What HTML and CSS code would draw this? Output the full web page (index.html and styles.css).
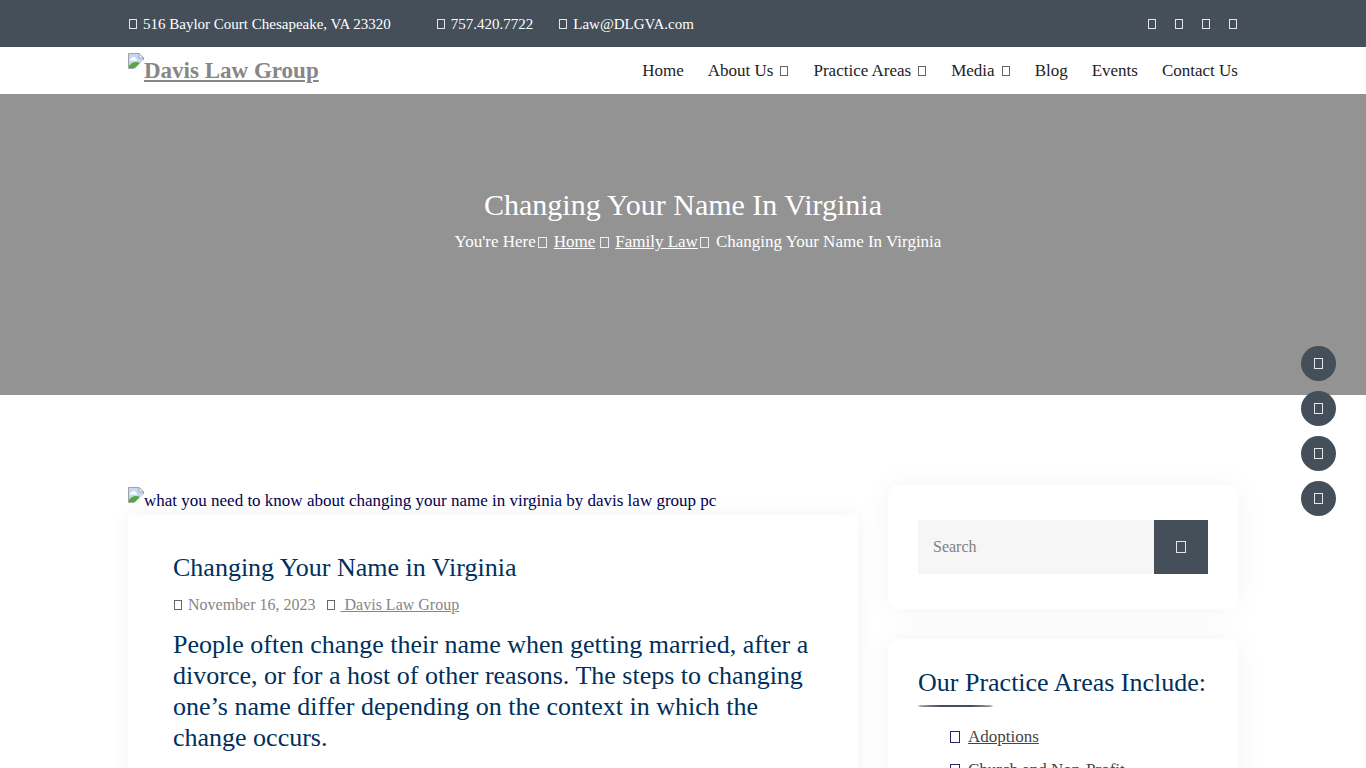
FILE: index.html
```html
<!DOCTYPE html>
<html lang="en">
<head>
    <meta charset="UTF-8">
    <meta name="viewport" content="width=device-width, initial-scale=1.0">
    <title>Changing Your Name in Virginia | Davis Law Group</title>
    <link rel="stylesheet" href="styles.css">
</head>
<body>
    <!-- Shared picture symbol -->
    <svg class="symbols" aria-hidden="true">
        <symbol id="picture" viewBox="0 0 16 16">
            <path d="M0.5 0.5H11L15.5 5V8L8 15.5H0.5Z" fill="#c6d7f4"/>
            <path d="M2 7C2 5.500 3 5 4 5.500C4.500 3.500 7.500 3.500 8 6C9 6 9.500 7 9 7.500H2Z" fill="#fff"/>
            <path d="M1 15V13C3 10 7 7.500 12 10L7 15Z" fill="#55a83f"/>
            <path d="M7 15.500L15.500 7V9L9 15.500Z" fill="#fff"/>
            <path d="M15.500 7V5L11 0.500H0.500V15.500H6" fill="none" stroke="#a3a3a3"/>
            <path d="M11 0.500V5H15.500Z" fill="#fff" stroke="#a3a3a3"/>
        </symbol>
    </svg>

    <div class="topbar">
        <div class="container topbar-row">
            <ul class="contact">
                <li class="address"><i class="icon small"></i>516 Baylor Court Chesapeake, VA 23320</li>
                <li><a href="tel:7574207722"><i class="icon small"></i>757.420.7722</a></li>
                <li><a href="mailto:Law@DLGVA.com"><i class="icon small"></i>Law@DLGVA.com</a></li>
            </ul>
            <ul class="social">
                <li><a href="#" aria-label="Facebook"><i class="icon small"></i></a></li>
                <li><a href="#" aria-label="Twitter"><i class="icon small"></i></a></li>
                <li><a href="#" aria-label="LinkedIn"><i class="icon small"></i></a></li>
                <li><a href="#" aria-label="YouTube"><i class="icon small"></i></a></li>
            </ul>
        </div>
    </div>

    <header class="container header">
        <a class="logo" href="#"><svg class="picture"><use href="#picture"/></svg><span>Davis Law Group</span></a>
        <nav class="menu">
            <a href="#">Home</a>
            <a href="#">About Us<i class="icon small"></i></a>
            <a href="#">Practice Areas<i class="icon small"></i></a>
            <a href="#">Media<i class="icon small"></i></a>
            <a href="#">Blog</a>
            <a href="#">Events</a>
            <a href="#">Contact Us</a>
        </nav>
    </header>

    <section class="banner">
        <h1>Changing Your Name In Virginia</h1>
        <div class="breadcrumb">
            <span>You're Here</span><i class="icon"></i>
            <a href="#">Home</a><i class="icon spaced"></i>
            <a href="#">Family Law</a><i class="icon"></i>
            <span>Changing Your Name In Virginia</span>
        </div>
    </section>

    <main class="container content">
        <article class="post">
            <div class="post-image"><svg class="picture"><use href="#picture"/></svg><span>what you need to know about changing your name in virginia by davis law group pc</span></div>
            <div class="post-body">
                <h2>Changing Your Name in Virginia</h2>
                <div class="meta">
                    <span><i class="icon small"></i>November 16, 2023</span>
                    <span><i class="icon small"></i><a href="#">&nbsp;Davis Law Group</a></span>
                </div>
                <h2>People often change their name when getting married, after a divorce, or for a host of other reasons. The steps to changing one’s name differ depending on the context in which the change occurs.</h2>
            </div>
        </article>

        <aside class="sidebar">
            <div class="widget">
                <form class="search">
                    <input type="text" placeholder="Search" aria-label="Search">
                    <button type="submit" aria-label="Submit search"><i class="icon large"></i></button>
                </form>
            </div>
            <div class="widget areas">
                <h2>Our Practice Areas Include:</h2>
                <ul>
                    <li><i class="icon large"></i><a href="#">Adoptions</a></li>
                    <li><i class="icon large"></i><a href="#">Church and Non-Profit</a></li>
                </ul>
            </div>
        </aside>
    </main>

    <!-- Floating share buttons -->
    <div class="share">
        <a href="#" aria-label="Facebook"><i class="icon"></i></a>
        <a href="#" aria-label="Twitter"><i class="icon"></i></a>
        <a href="#" aria-label="LinkedIn"><i class="icon"></i></a>
        <a href="#" aria-label="Email"><i class="icon"></i></a>
    </div>
</body>
</html>
```
FILE: styles.css
```css
* {
    box-sizing: border-box;
}
body {
    margin: 0;
    font-family: "Liberation Serif", serif;
    font-size: 17px;
    line-height: 26px;
    color: #02014f;
    background: #fff;
}
ul {
    list-style: none;
    margin: 0;
    padding: 0;
}
h1, h2 {
    margin: 0;
    font-weight: normal;
}
h2 {
    font-size: 26px;
    line-height: 31px;
    color: #00305b;
}
.container {
    width: calc(100% - 30px);
    max-width: 1110px;
    margin: 0 auto;
}
.symbols {
    display: none;
}
.picture {
    width: 16px;
    height: 16px;
    flex: none;
}

/* icon boxes */
.icon {
    display: inline-block;
    flex: none;
    width: 9px;
    height: 11px;
    border: 1px solid currentColor;
    opacity: 0.85;
}
.icon.small {
    width: 8px;
    height: 10px;
}
.icon.large {
    width: 10px;
    height: 12px;
}

/* top bar */
.topbar {
    background: #444f5a;
    color: #fff;
    font-size: 15px;
}
.topbar a {
    color: #fff;
    text-decoration: none;
}
.topbar-row {
    display: flex;
    justify-content: space-between;
    align-items: center;
    height: 47px;
}
.contact, .social {
    display: flex;
}
.contact {
    gap: 25px;
}
.contact .icon {
    margin: 0 6px 0 1px;
}
.contact .address {
    margin-right: 20px;
}
.social {
    gap: 19px;
    padding-right: 1px;
}

/* header */
.header {
    display: flex;
    justify-content: space-between;
    align-items: center;
    height: 47px;
}
.logo {
    display: flex;
    color: #868686;
    font-size: 23px;
    font-weight: bold;
    line-height: 36px;
    text-decoration: none;
}
.logo span {
    text-decoration: underline;
}
.menu {
    display: flex;
    gap: 24px;
}
.menu a {
    color: #222;
    text-decoration: none;
}
.menu .icon {
    margin: 0 1px 0 7px;
    opacity: 0.7;
}

/* banner */
.banner {
    min-height: 301px;
    padding-top: 93px;
    background: #939393;
    color: #fff;
    text-align: center;
}
.banner h1 {
    font-size: 30px;
    line-height: 36px;
}
.breadcrumb {
    display: flex;
    justify-content: center;
    align-items: center;
    padding-left: 30px;
    margin-top: 6px;
}
.breadcrumb a {
    color: #fff;
}
.breadcrumb .icon {
    margin: 0 7px 0 2px;
}
.breadcrumb .spaced {
    margin: 0 6px 0 5px;
}

/* content */
.content {
    display: grid;
    grid-template-columns: minmax(0, 730fr) minmax(0, 350fr);
    gap: 30px;
    padding-top: 90px;
}
.post-image {
    display: flex;
    padding-top: 2px;
    min-height: 30px;
    line-height: 28px;
}
.post-body {
    padding: 37px 45px;
    box-shadow: 0 0 20px rgba(0, 0, 0, 0.05);
}
.meta {
    display: flex;
    gap: 10px;
    margin: 9px 0 11px;
    font-size: 16px;
    color: #868686;
}
.meta a {
    color: #868686;
}
.meta .icon {
    margin: 0 6px 0 1px;
    color: #444f5a;
}
.widget {
    margin-bottom: 30px;
    padding: 35px 30px;
    border-radius: 10px;
    box-shadow: 0 0 30px rgba(0, 0, 0, 0.05);
}
.search {
    display: flex;
}
.search input {
    flex: 1;
    min-width: 0;
    height: 54px;
    padding: 0 15px;
    border: none;
    background: #f6f6f6;
    font-family: inherit;
    font-size: 16px;
}
.search input::placeholder {
    color: #808080;
}
.search button {
    display: flex;
    align-items: center;
    justify-content: center;
    width: 54px;
    height: 54px;
    border: none;
    background: #444f5a;
    color: #fff;
}
.areas {
    padding-top: 28px;
}
.areas h2::after {
    content: "";
    display: block;
    width: 75px;
    height: 2px;
    margin-top: 7px;
    border-radius: 50%;
    background: #444f5a;
}
.areas ul {
    margin-top: 17px;
    padding-left: 32px;
}
.areas li {
    display: flex;
    align-items: center;
    gap: 8px;
    margin-bottom: 7px;
}
.areas a {
    color: #444;
}

/* share buttons */
.share {
    position: fixed;
    top: 346px;
    right: 30px;
    display: flex;
    flex-direction: column;
    gap: 10px;
}
.share a {
    display: flex;
    align-items: center;
    justify-content: center;
    width: 35px;
    height: 35px;
    border-radius: 50%;
    background: #444f5a;
    color: #fff;
}
```
